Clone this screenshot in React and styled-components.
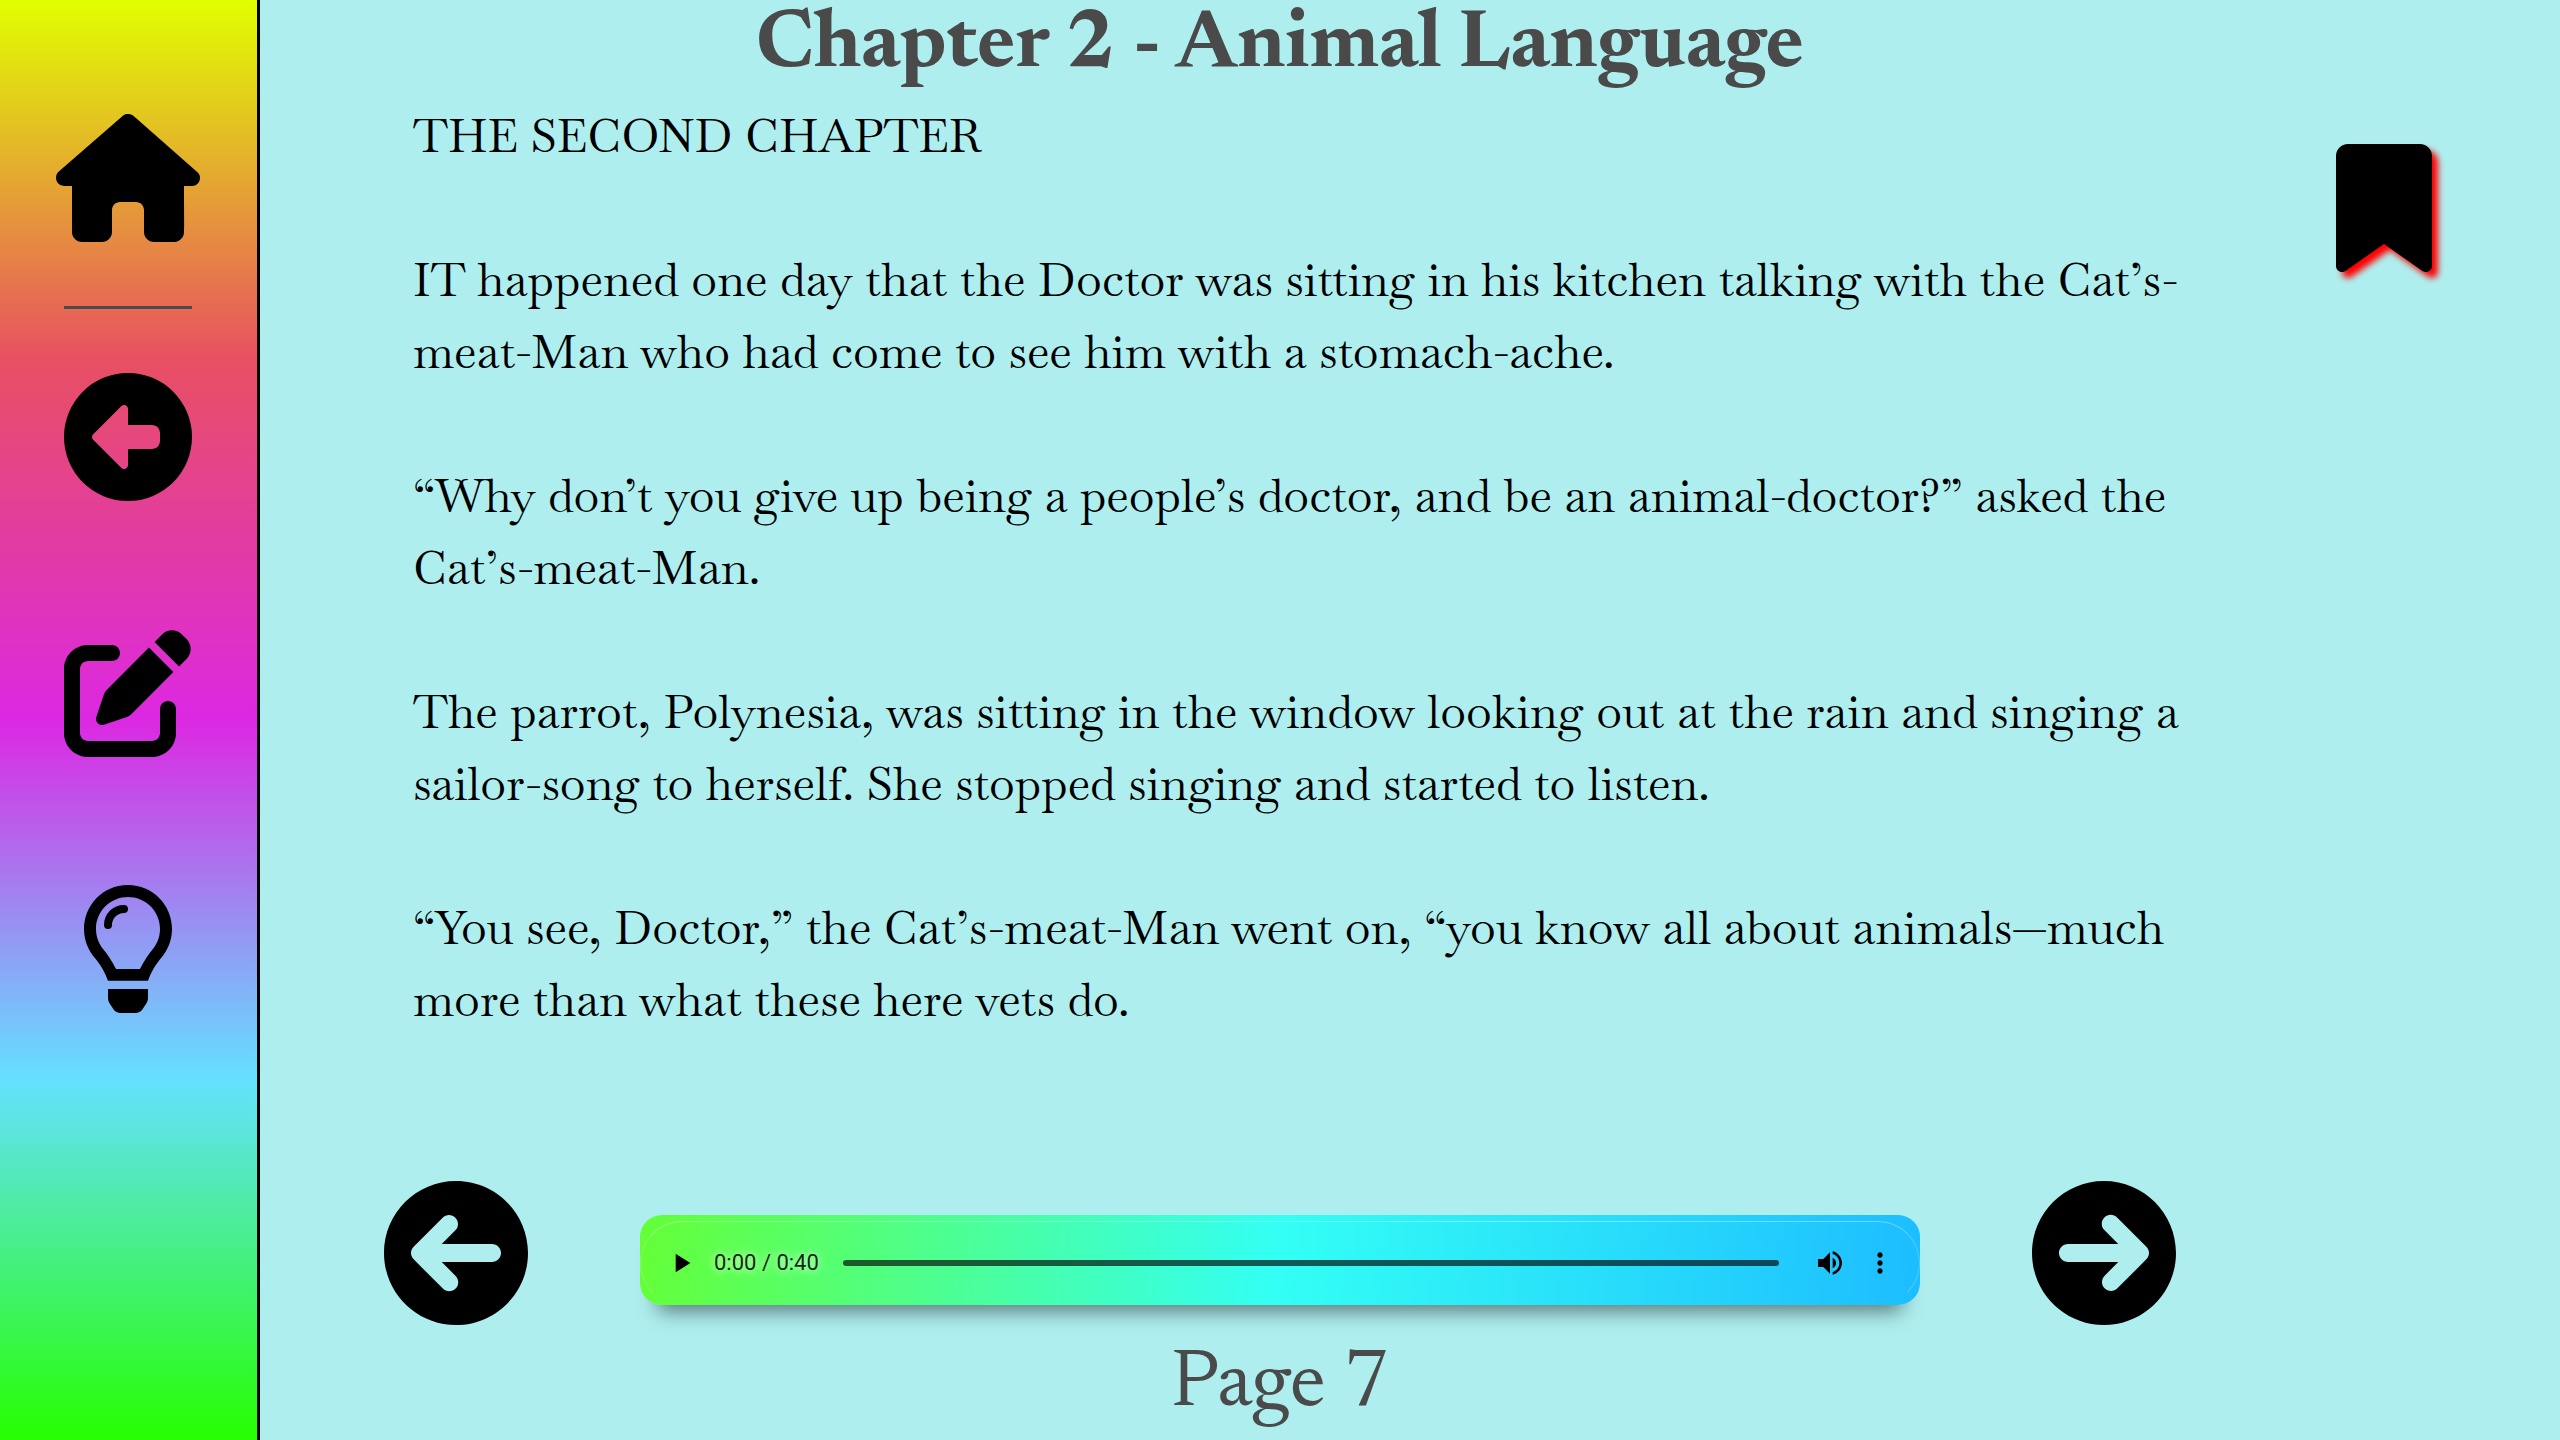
import React, { useState } from "react";
import styled, { createGlobalStyle } from "styled-components";
import { FaHouse, FaCircleLeft, FaPenToSquare, FaBookmark } from "react-icons/fa6";
import { MdPlayArrow, MdVolumeUp, MdMoreVert } from "react-icons/md";

const GlobalStyle = createGlobalStyle`
  *, *::before, *::after { box-sizing: border-box; }
  body {
    margin: 0;
    background: #afeeee;
    font-family: Baskervville, "Liberation Serif", serif;
  }
`;

const Layout = styled.div`
  display: grid;
  grid-template-columns: 260px minmax(0, 1fr);
  min-height: 100vh;
`;

const Sidebar = styled.nav`
  display: flex;
  flex-direction: column;
  align-items: center;
  padding: 114px 1px 0 0;
  border-right: 3px solid #000;
  background: linear-gradient(#e1ff00, #e85062 25%, #dc28e2 50%, #64e1ff 75%, #26ff00);
`;

const NavLink = styled.a`
  display: flex;
  color: #000;
  margin-bottom: ${(p) => (p.$wide ? 0 : 128)}px;

  svg {
    display: block;
    width: ${(p) => (p.$wide ? 144 : 128)}px;
    height: 128px;
  }
`;

const Divider = styled.hr`
  width: 128px;
  height: 3px;
  margin: 64px 0;
  border: 0;
  background: #4a4a4a;
`;

const Main = styled.main`
  display: grid;
  grid-template-columns: 124px minmax(0, 1fr) 352px;
  grid-template-rows: auto 1fr auto;
`;

const Title = styled.h1`
  grid-column: 2;
  margin: 0 32px 0 0;
  color: #4a4a4a;
  font-family: Newsreader, "Liberation Serif", serif;
  font-size: 82px;
  line-height: 94px;
  text-align: center;
`;

const Story = styled.article`
  grid-column: 2;
  padding: 6px 0 0 29px;
  font-size: 47px;
  line-height: 72px;

  p { margin: 0 0 72px; }
`;

const BookmarkButton = styled.button`
  justify-self: end;
  align-self: start;
  margin: 50px 128px 0 0;
  padding: 0;
  border: 0;
  background: none;
  color: #000;
  cursor: pointer;

  svg { display: block; width: 96px; height: 128px; filter: drop-shadow(6px 6px 3px #f00); }
`;

const Controls = styled.footer`
  grid-column: 2;
  display: grid;
  grid-template-columns: 144px minmax(0, 1fr) 144px;
  column-gap: 112px;
  margin-right: 32px;
`;

const TurnButton = styled.button`
  padding: 0;
  border: 0;
  height: 144px;
  background: none;
  color: #000;
  cursor: pointer;

  svg { display: block; width: 144px; height: 144px; }
`;

const Player = styled.section`
  height: 90px;
  margin-top: 34px;
  padding-top: 6px;
  border-radius: 22px;
  background: linear-gradient(95deg, #64ff37, #33fff5 50%, #1dbdff);
  box-shadow: 0 24px 20px -18px rgba(0, 0, 0, 0.5);
`;

const PlayerPanel = styled.div`
  display: flex;
  align-items: center;
  height: 84px;
  padding: 0 23px 0 24px;
  border: 1px solid rgba(255, 255, 255, 0.2);
  border-top-color: rgba(255, 255, 255, 0.35);
  border-bottom-color: transparent;
  border-radius: 42px;
`;

const PlayerButton = styled.button`
  display: flex;
  padding: 0;
  border: 0;
  background: none;
  color: #000;
  cursor: pointer;

  & + & { margin-left: 18px; }

  svg { width: 32px; height: 32px; }
`;

const Time = styled.span`
  margin: 0 24px 0 17px;
  font: 22px/32px Roboto, sans-serif;
  color: rgba(0, 0, 0, 0.87);
  text-shadow: 0 0 10px #fff;
`;

const Seek = styled.input`
  flex: 1;
  height: 6px;
  margin: 0 35px 0 0;
  appearance: none;
  border-radius: 3px;
  background: rgba(0, 0, 0, 0.65);

  &::-webkit-slider-thumb { appearance: none; width: 0; height: 0; }
`;

const PageNumber = styled.p`
  grid-column: 1 / -1;
  margin: 0;
  padding: 14px 0 7px;
  color: #4a4a4a;
  font-family: Newsreader, "Liberation Serif", serif;
  font-size: 82px;
  line-height: 94px;
  text-align: center;
`;

const ArrowCircle = ({ right }) => (
  <svg viewBox="0 0 512 512" fill="currentColor" aria-hidden="true">
    <path
      transform={right ? "rotate(180 256 256)" : undefined}
      d="M256 0C114.6 0 0 114.6 0 256c0 141.4 114.6 256 256 256s256-114.6 256-256C512 114.6 397.4 0 256 0zM384 288H205.3l49.38 49.38c12.5 12.5 12.5 32.75 0 45.25s-32.75 12.5-45.25 0L105.4 278.6C97.4 270.7 96 260.9 96 256c0-4.883 1.391-14.66 9.398-22.65l103.1-103.1c12.5-12.5 32.75-12.5 45.25 0s12.5 32.75 0 45.25L205.3 224H384c17.69 0 32 14.33 32 32S401.7 288 384 288z"
    />
  </svg>
);

const Lightbulb = () => (
  <svg viewBox="0 0 384 512" fill="currentColor" aria-hidden="true">
    <path d="M112.1 454.3c0 6.3 1.8 12.4 5.3 17.7l17.1 25.7c5.3 7.9 17.2 14.3 26.6 14.3h61.7c9.4 0 21.4-6.4 26.6-14.3l17.1-25.7c2.9-4.4 5.3-12.4 5.3-17.7L272 416H112z" />
    <path
      fillRule="evenodd"
      d="M191.4 0C89.4.3 16 83 16 176c0 44.4 16.4 84.8 43.6 115.8 16.5 18.8 42.3 58.2 52.2 91.4h160.4c9.9-33.2 35.7-72.6 52.2-91.4C351.6 260.8 368 220.4 368 176 368 78.6 288.9-.3 191.4 0zM239.9 336H144.1c-15.6-31.5-35.5-60.5-48.4-76.4C75.2 236.6 64 206.8 64 176 64 102 124 48 192 48s128 54 128 128c0 30.8-11.2 60.6-31.7 83.6-12.9 15.9-32.8 44.9-48.4 76.4z"
    />
    <path d="M176 96a64 64 0 0 0-64 64" fill="none" stroke="currentColor" strokeWidth="32" strokeLinecap="round" />
  </svg>
);

const paragraphs = [
  "THE SECOND CHAPTER",
  "IT happened one day that the Doctor was sitting in his kitchen talking with the Cat’s-meat-Man who had come to see him with a stomach-ache.",
  "“Why don’t you give up being a people’s doctor, and be an animal-doctor?” asked the Cat’s-meat-Man.",
  "The parrot, Polynesia, was sitting in the window looking out at the rain and singing a sailor-song to herself. She stopped singing and started to listen.",
  "“You see, Doctor,” the Cat’s-meat-Man went on, “you know all about animals—much more than what these here vets do.",
];

export default function App() {
  const [position, setPosition] = useState(0);

  return (
    <>
      <GlobalStyle />
      <Layout>
        <Sidebar>
          <NavLink $wide href="#home" aria-label="Home"><FaHouse /></NavLink>
          <Divider />
          <NavLink href="#back" aria-label="Back"><FaCircleLeft /></NavLink>
          <NavLink href="#write" aria-label="Write"><FaPenToSquare /></NavLink>
          <NavLink href="#ideas" aria-label="Ideas"><Lightbulb /></NavLink>
        </Sidebar>
        <Main>
          <Title>Chapter 2 - Animal Language</Title>
          <Story>
            {paragraphs.map((text) => <p key={text}>{text}</p>)}
          </Story>
          <BookmarkButton aria-label="Bookmark this page"><FaBookmark /></BookmarkButton>
          <Controls>
            <TurnButton aria-label="Previous page"><ArrowCircle /></TurnButton>
            <Player aria-label="Narration">
              <PlayerPanel>
                <PlayerButton aria-label="Play"><MdPlayArrow /></PlayerButton>
                <Time>0:00 / 0:40</Time>
                <Seek
                  type="range"
                  aria-label="Seek"
                  min="0"
                  max="40"
                  value={position}
                  onChange={(e) => setPosition(Number(e.target.value))}
                />
                <PlayerButton aria-label="Volume"><MdVolumeUp /></PlayerButton>
                <PlayerButton aria-label="More options"><MdMoreVert /></PlayerButton>
              </PlayerPanel>
            </Player>
            <TurnButton aria-label="Next page"><ArrowCircle right /></TurnButton>
            <PageNumber>Page 7</PageNumber>
          </Controls>
        </Main>
      </Layout>
    </>
  );
}
